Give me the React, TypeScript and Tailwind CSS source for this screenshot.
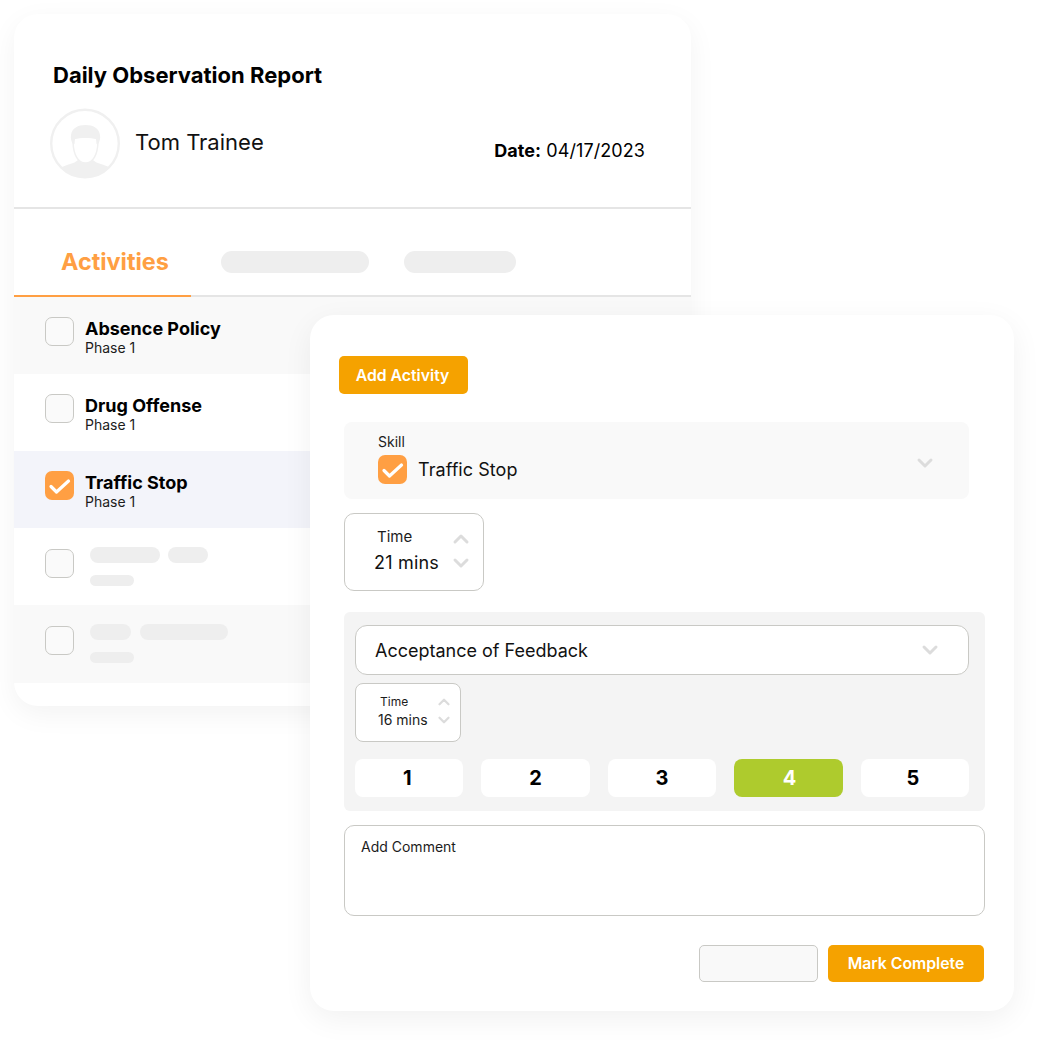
import { ChevronDown, ChevronUp } from "lucide-react";

const font = "font-['Inter','Liberation_Sans',sans-serif]";

function CheckBox({ checked = false }: { checked?: boolean }) {
  if (checked) {
    return (
      <div className="h-[29px] w-[29px] shrink-0 rounded-[7px] bg-[#ff9f43]">
        <svg viewBox="0 0 29 29" className="h-[29px] w-[29px]" fill="none">
          <polyline
            points="6,15.5 11.5,21 23.5,10"
            stroke="#fff"
            strokeWidth="3.2"
            strokeLinecap="round"
            strokeLinejoin="round"
          />
        </svg>
      </div>
    );
  }
  return <div className="h-[29px] w-[29px] shrink-0 rounded-[7px] border border-[#c9c9c5] bg-[#fafafa]" />;
}

function Avatar() {
  return (
    <svg viewBox="0 0 71 71" className="h-[71px] w-[71px] shrink-0" fill="none">
      <defs>
        <clipPath id="avatar-clip">
          <circle cx="35" cy="35.5" r="34" />
        </clipPath>
      </defs>
      <circle cx="35" cy="35.5" r="33.8" stroke="#f0f0f0" strokeWidth="2.4" fill="#fff" />
      <g clipPath="url(#avatar-clip)">
        <path d="M10 60C17 56 24 56 28 52H43C47 56 54 56 61 60V72H10Z" fill="#f0f0f0" />
      </g>
      <path d="M23 34C23.5 47 28 55 35.5 55C43 55 47.5 47 48 34" stroke="#f0f0f0" strokeWidth="1.5" fill="#fff" />
      <path
        d="M23 36C21 33 20.5 30 21 27C22 20 28 17 35.5 17C43 17 49 20 50 27C50.5 30 50 33 48 36H46.5L46 31C41 29.5 30 29.5 25 31L24.5 36Z"
        fill="#f0f0f0"
      />
    </svg>
  );
}

function Row({ title, bg, checked }: { title: string; bg: string; checked?: boolean }) {
  return (
    <div className={`flex h-[77px] items-start gap-[11px] pt-[20px] pl-[31px] ${bg}`}>
      <CheckBox checked={checked} />
      <div className="mt-[1px] flex flex-col">
        <span className="text-[18px] leading-[22px] font-bold text-black">{title}</span>
        <span className="text-[14px] leading-[16px] text-[#1c1c1c]">Phase 1</span>
      </div>
    </div>
  );
}

function Bar({ w, h }: { w: string; h: string }) {
  return <div className={`rounded-full bg-[#eeeeee] ${w} ${h}`} />;
}

function TimeBox({ small, value }: { small?: boolean; value: string }) {
  if (small) {
    return (
      <div className="flex h-[59px] w-[106px] items-center rounded-[8px] border border-[#c9c9c5] bg-white pb-[3px] pl-[22px]">
        <div className="flex w-[57px] flex-col">
          <span className="pl-[2px] text-[12px] leading-[17px] text-[#1c1c1c]">Time</span>
          <span className="text-[14px] leading-[20px] text-[#1c1c1c]">{value}</span>
        </div>
        <div className="flex flex-col items-center">
          <ChevronUp size={18} strokeWidth={3} className="text-[#dcdcdc]" />
          <ChevronDown size={18} strokeWidth={3} className="text-[#dcdcdc]" />
        </div>
      </div>
    );
  }
  return (
    <div className="flex h-[78px] w-[140px] items-center rounded-[10px] border border-[#c9c9c5] bg-white pb-[3px] pl-[29px]">
      <div className="flex w-[75px] flex-col">
        <span className="pl-[3px] text-[15px] leading-[24px] text-[#1c1c1c]">Time</span>
        <span className="text-[18px] leading-[28px] tracking-[0.2px] text-[#111111]">{value}</span>
      </div>
      <div className="flex flex-col items-center">
        <ChevronUp size={24} strokeWidth={3} className="text-[#dcdcdc]" />
        <ChevronDown size={24} strokeWidth={3} className="text-[#dcdcdc]" />
      </div>
    </div>
  );
}

function ReportCard() {
  return (
    <div className="absolute top-[14px] left-[14px] h-[692px] w-[677px] overflow-hidden rounded-[24px] bg-white shadow-[0_8px_28px_rgba(0,0,0,0.05)]">
      <div className="h-[195px] border-b-2 border-[#e5e5e5] pt-[46px]">
        <h1 className="pl-[39px] text-[22px] leading-[30px] font-bold text-black">Daily Observation Report</h1>
        <div className="mt-[18px] flex items-start pr-[46px] pl-[36px]">
          <Avatar />
          <span className="mt-[18px] ml-[14px] text-[22px] leading-[32px] text-[#111111]">Tom Trainee</span>
          <span className="mt-[29px] ml-auto text-[18px] leading-[28px] tracking-[0.08px] text-black">
            <b className="font-bold">Date:</b> 04/17/2023
          </span>
        </div>
      </div>
      <div className="flex h-[88px] items-center border-b-2 border-[#e5e5e5]">
        <div className="-mb-[2px] flex h-[88px] w-[177px] items-center border-b-2 border-[#ff9f43] pt-[20px] pl-[47px]">
          <span className="text-[23.4px] font-bold text-[#ff9f43]">Activities</span>
        </div>
        <div className="mt-[20px] ml-[30px] h-[22px] w-[148px] rounded-full bg-[#eeeeee]" />
        <div className="mt-[20px] ml-[35px] h-[22px] w-[112px] rounded-full bg-[#eeeeee]" />
      </div>
      <Row title="Absence Policy" bg="bg-[#f9f9f9]" />
      <Row title="Drug Offense" bg="bg-white" />
      <Row title="Traffic Stop" bg="bg-[#f3f4fa]" checked />
      <div className="flex h-[77px] items-start pt-[21px] pl-[31px]">
        <CheckBox />
        <div className="-mt-[2px] ml-[16px] flex flex-col gap-[12px]">
          <div className="flex gap-[8px]">
            <Bar w="w-[70px]" h="h-[16px]" />
            <Bar w="w-[40px]" h="h-[16px]" />
          </div>
          <Bar w="w-[44px]" h="h-[11px]" />
        </div>
      </div>
      <div className="flex h-[78px] items-start bg-[#f9f9f9] pt-[21px] pl-[31px]">
        <CheckBox />
        <div className="-mt-[2px] ml-[16px] flex flex-col gap-[12px]">
          <div className="flex gap-[9px]">
            <Bar w="w-[41px]" h="h-[16px]" />
            <Bar w="w-[88px]" h="h-[16px]" />
          </div>
          <Bar w="w-[44px]" h="h-[11px]" />
        </div>
      </div>
    </div>
  );
}

function ActivityCard() {
  return (
    <div className="absolute top-[315px] left-[310px] h-[696px] w-[704px] rounded-[24px] bg-white pt-[41px] pl-[29px] shadow-[0_8px_30px_rgba(0,0,0,0.06)]">
      <button className="h-[38px] w-[129px] rounded-[5px] bg-[#f5a200] pt-[2px] pr-[2px] text-[15.8px] font-semibold text-white">
        Add Activity
      </button>

      <div className="mt-[28px] ml-[5px] flex h-[77px] w-[625px] items-start justify-between rounded-[8px] bg-[#f9f9f9] pt-[11px] pr-[32px] pl-[34px]">
        <div className="flex flex-col">
          <span className="text-[14px] leading-[17px] text-[#1c1c1c]">Skill</span>
          <div className="mt-[4px] flex items-center gap-[11px]">
            <CheckBox checked />
            <span className="pt-[2px] text-[18px] leading-[28px] tracking-[0.05px] text-[#111111]">Traffic Stop</span>
          </div>
        </div>
        <ChevronDown size={24} strokeWidth={3} className="mt-[18px] text-[#dcdcdc]" />
      </div>

      <div className="mt-[14px] ml-[5px]">
        <TimeBox value="21 mins" />
      </div>

      <div className="mt-[21px] ml-[5px] h-[199px] w-[641px] rounded-[6px] bg-[#f4f4f4] pt-[13px] pl-[11px]">
        <div className="flex h-[50px] w-[614px] items-center justify-between rounded-[12px] border border-[#c9c9c5] bg-white pr-[26px] pl-[19px]">
          <span className="text-[18px] text-[#111111]">Acceptance of Feedback</span>
          <ChevronDown size={24} strokeWidth={3} className="text-[#dcdcdc]" />
        </div>
        <div className="mt-[8px]">
          <TimeBox small value="16 mins" />
        </div>
        <div className="mt-[17px] grid w-[614px] grid-cols-5 gap-[18px]">
          {[1, 2, 3, 4, 5].map((n) => (
            <div
              key={n}
              className={`flex h-[38px] items-center justify-center rounded-[8px] text-[20px] font-bold ${
                n === 4
                  ? "bg-[#aecb2d] pl-[2px] text-white"
                  : n === 1 || n === 5
                    ? "bg-white pr-[4px] text-black"
                    : "bg-white text-black"
              }`}
            >
              {n}
            </div>
          ))}
        </div>
      </div>

      <div className="mt-[14px] ml-[5px] h-[91px] w-[641px] rounded-[10px] border border-[#c9c9c5] bg-white px-[16px] pt-[11px]">
        <span className="block text-[14px] leading-[20px] text-[#1c1c1c]">Add Comment</span>
      </div>

      <div className="mt-[29px] ml-[360px] flex w-[285px] gap-[10px]">
        <div className="h-[37px] w-[119px] rounded-[5px] border border-[#c9c9c5] bg-[#f9f9f9]" />
        <button className="h-[37px] w-[156px] rounded-[5px] bg-[#f5a200] text-[15.8px] font-semibold text-white">
          Mark Complete
        </button>
      </div>
    </div>
  );
}

export default function App() {
  return (
    <div className={`relative h-[1040px] w-[1037px] overflow-hidden bg-white ${font}`}>
      <ReportCard />
      <ActivityCard />
    </div>
  );
}
